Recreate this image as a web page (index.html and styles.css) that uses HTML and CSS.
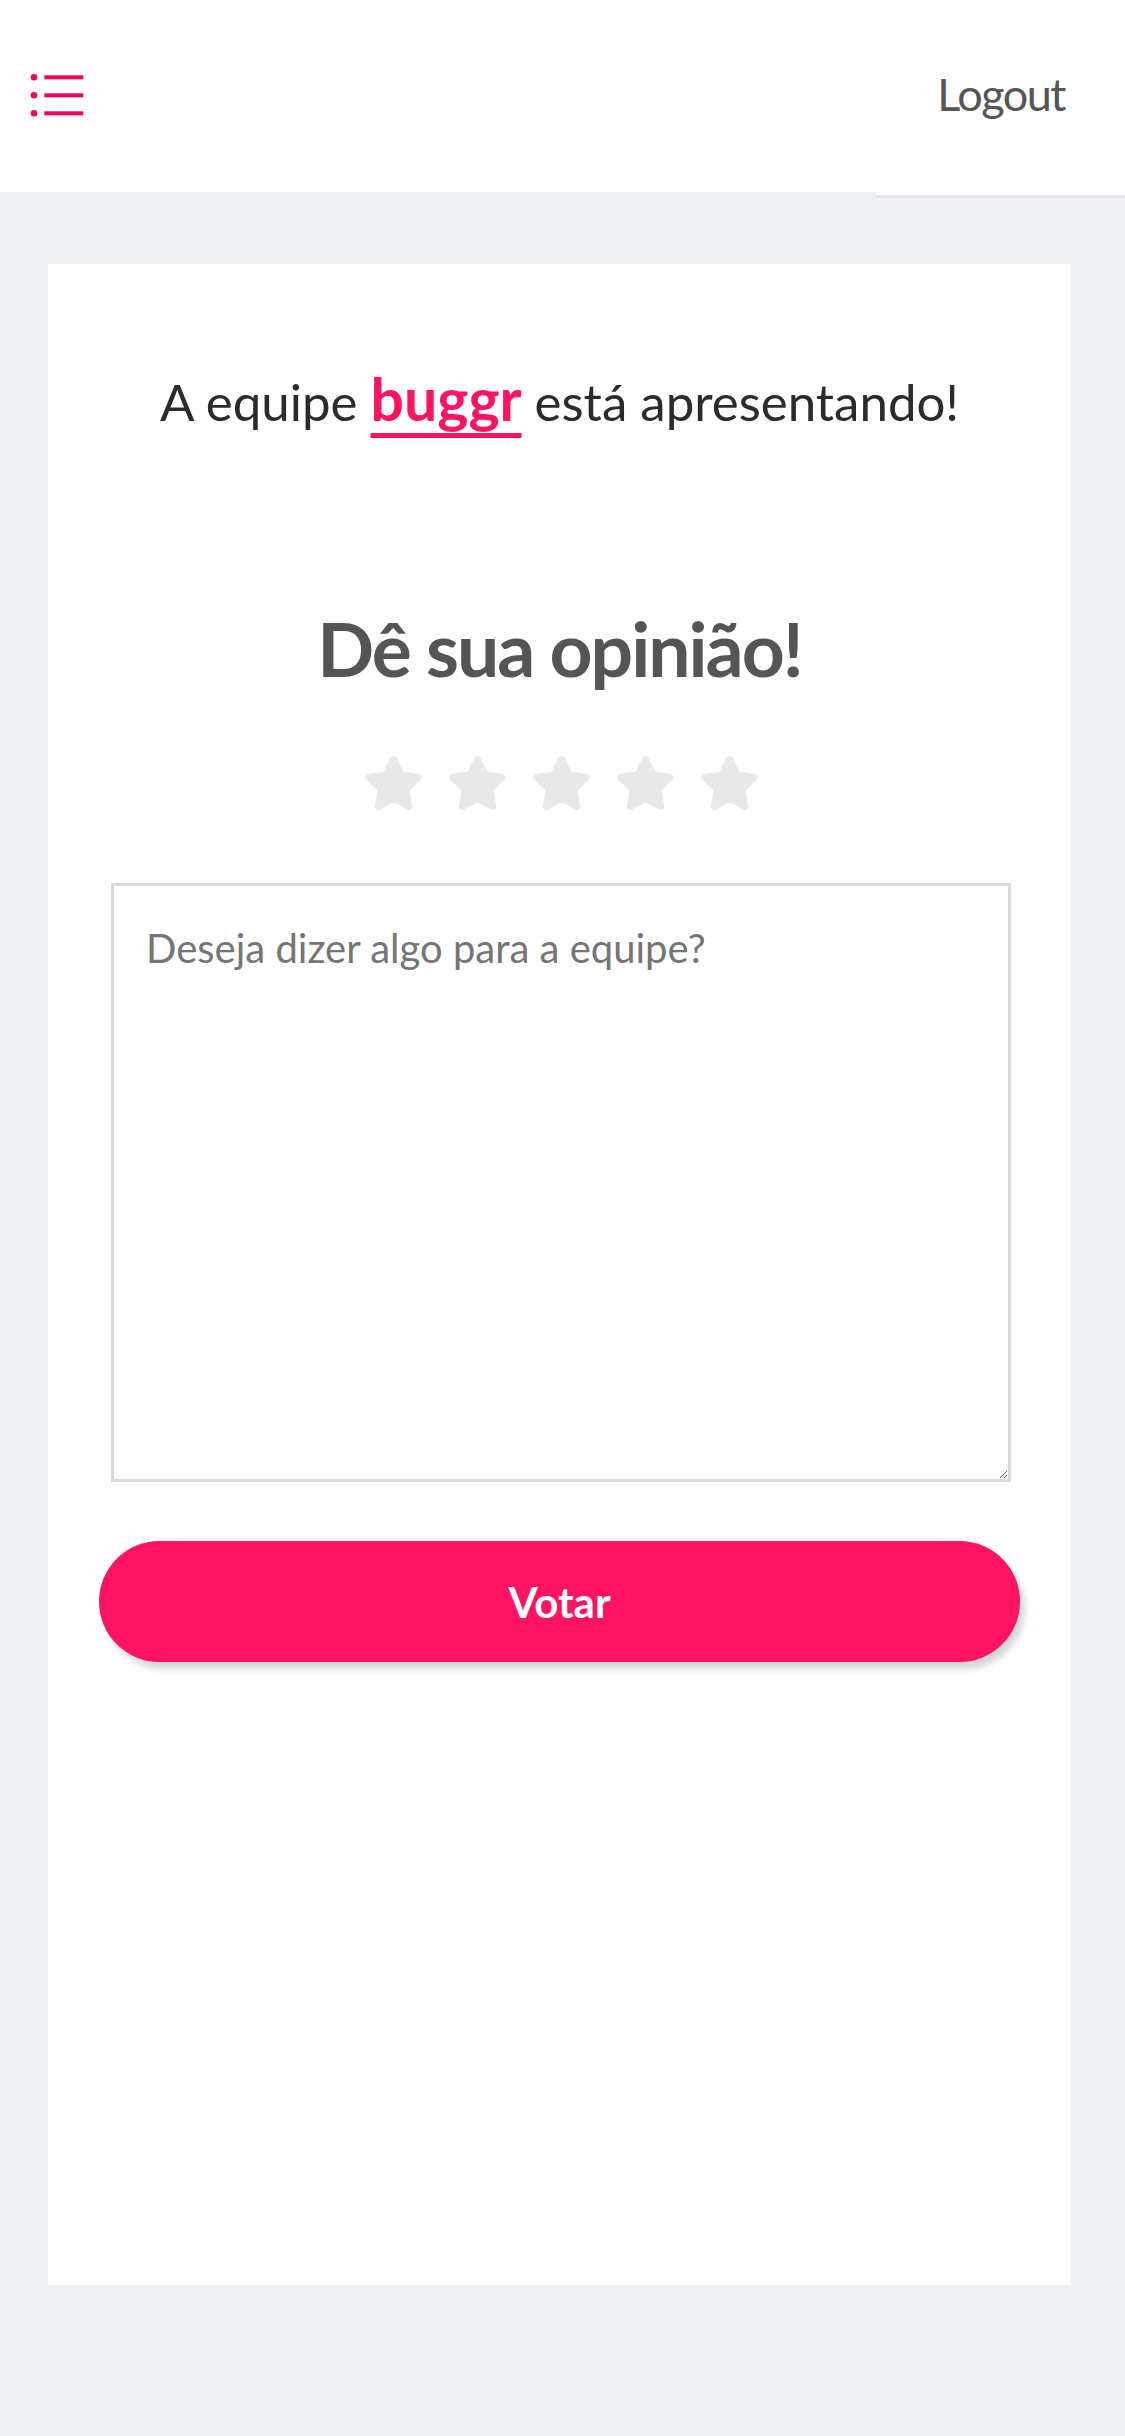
FILE: index.html
```html
<!DOCTYPE html>
<html lang="pt-BR">
<head>
<meta charset="utf-8">
<title>Dê sua opinião</title>
<link rel="stylesheet" href="styles.css">
</head>
<body>
<header class="topbar">
  <button class="menu-btn" aria-label="Menu">
    <svg class="menu-icon" viewBox="0 0 54 44" width="54" height="44">
      <circle cx="4" cy="4.3" r="3.3"/>
      <circle cx="4" cy="22.3" r="3.3"/>
      <circle cx="4" cy="40.3" r="3.3"/>
      <rect x="14.3" y="2.3" width="39" height="4"/>
      <rect x="14.3" y="20.3" width="39" height="4"/>
      <rect x="14.3" y="38.3" width="39" height="4"/>
    </svg>
  </button>
  <div class="logout">Logout</div>
</header>
<main class="page">
  <section class="card">
    <p class="team-line">A equipe <a class="team-name" href="#">buggr</a> está apresentando!</p>
    <h1 class="heading">Dê sua opinião!</h1>
    <div class="stars">
      <svg class="star" viewBox="20 0 536 512"><path d="M259.3 17.8L194 150.2 47.9 171.5c-26.2 3.8-36.7 36.1-17.7 54.6l105.7 103-25 145.5c-4.5 26.3 23.2 46 46.4 33.7L288 439.6l130.7 68.7c23.2 12.2 50.9-7.4 46.4-33.7l-25-145.5 105.7-103c19-18.5 8.5-50.8-17.7-54.6L382 150.2 316.7 17.8c-11.7-23.6-45.6-23.9-57.4 0z"/></svg>
      <svg class="star" viewBox="20 0 536 512"><path d="M259.3 17.8L194 150.2 47.9 171.5c-26.2 3.8-36.7 36.1-17.7 54.6l105.7 103-25 145.5c-4.5 26.3 23.2 46 46.4 33.7L288 439.6l130.7 68.7c23.2 12.2 50.9-7.4 46.4-33.7l-25-145.5 105.7-103c19-18.5 8.5-50.8-17.7-54.6L382 150.2 316.7 17.8c-11.7-23.6-45.6-23.9-57.4 0z"/></svg>
      <svg class="star" viewBox="20 0 536 512"><path d="M259.3 17.8L194 150.2 47.9 171.5c-26.2 3.8-36.7 36.1-17.7 54.6l105.7 103-25 145.5c-4.5 26.3 23.2 46 46.4 33.7L288 439.6l130.7 68.7c23.2 12.2 50.9-7.4 46.4-33.7l-25-145.5 105.7-103c19-18.5 8.5-50.8-17.7-54.6L382 150.2 316.7 17.8c-11.7-23.6-45.6-23.9-57.4 0z"/></svg>
      <svg class="star" viewBox="20 0 536 512"><path d="M259.3 17.8L194 150.2 47.9 171.5c-26.2 3.8-36.7 36.1-17.7 54.6l105.7 103-25 145.5c-4.5 26.3 23.2 46 46.4 33.7L288 439.6l130.7 68.7c23.2 12.2 50.9-7.4 46.4-33.7l-25-145.5 105.7-103c19-18.5 8.5-50.8-17.7-54.6L382 150.2 316.7 17.8c-11.7-23.6-45.6-23.9-57.4 0z"/></svg>
      <svg class="star" viewBox="20 0 536 512"><path d="M259.3 17.8L194 150.2 47.9 171.5c-26.2 3.8-36.7 36.1-17.7 54.6l105.7 103-25 145.5c-4.5 26.3 23.2 46 46.4 33.7L288 439.6l130.7 68.7c23.2 12.2 50.9-7.4 46.4-33.7l-25-145.5 105.7-103c19-18.5 8.5-50.8-17.7-54.6L382 150.2 316.7 17.8c-11.7-23.6-45.6-23.9-57.4 0z"/></svg>
    </div>
    <textarea class="comment" placeholder="Deseja dizer algo para a equipe?"></textarea>
    <button class="vote-btn">Votar</button>
  </section>
</main>
</body>
</html>
```

FILE: styles.css
```css
* {
  box-sizing: border-box;
}

html, body {
  margin: 0;
  padding: 0;
}

body {
  background: #eff0f4;
  font-family: Lato, "Open Sans", "Liberation Sans", sans-serif;
  width: 1125px;
  min-height: 2436px;
}

.topbar {
  height: 192px;
  background: #ffffff;
  display: flex;
  justify-content: space-between;
  align-items: flex-start;
}

.menu-btn {
  margin: 73px 0 0 30px;
  padding: 0;
  border: 0;
  background: none;
  line-height: 0;
}

.menu-icon {
  fill: #f0035a;
  display: block;
}

.logout {
  width: 249px;
  height: 198px;
  background: #ffffff;
  border-bottom: 3px solid #e5e6e9;
  display: flex;
  align-items: center;
  justify-content: flex-end;
  padding: 0 60px 8px 0;
  font-size: 45px;
  letter-spacing: -1.5px;
  color: #555555;
}

.page {
  padding: 72px 54px 0 48px;
}

.card {
  background: #ffffff;
  min-height: 2021px;
  display: flex;
  flex-direction: column;
  align-items: center;
  padding-top: 98px;
}

.team-line {
  margin: 0;
  font-size: 51px;
  line-height: 80px;
  color: #2b2b2b;
}

.team-name {
  font-weight: 700;
  font-size: 59px;
  line-height: 1;
  color: #ff1464;
  text-decoration: underline;
  text-decoration-thickness: 5px;
  text-underline-offset: 12px;
}

.heading {
  margin: 160px 0 0;
  font-size: 75px;
  line-height: 92px;
  letter-spacing: -2px;
  font-weight: 700;
  color: #555555;
}

.stars {
  margin-top: 62px;
  display: flex;
  gap: 27px;
  padding-left: 3px;
}

.star {
  width: 57px;
  height: 54px;
  fill: #e8e8e8;
  display: block;
}

.comment {
  margin-top: 73px;
  margin-left: 3px;
  width: 900px;
  height: 599px;
  border: 3px solid #d9d9d9;
  padding: 38px 32px;
  font-family: Lato, "Open Sans", sans-serif;
  font-size: 40px;
  color: #333333;
  background: #ffffff;
  resize: vertical;
}

.comment::placeholder {
  color: #757575;
}

.vote-btn {
  margin-top: 59px;
  width: 921px;
  height: 121px;
  border: 0;
  border-radius: 61px;
  background: #ff1464;
  color: #ffffff;
  font-family: Lato, "Open Sans", sans-serif;
  font-weight: 700;
  font-size: 42px;
  box-shadow: 5px 7px 6px rgba(0, 0, 0, 0.16);
}
```
